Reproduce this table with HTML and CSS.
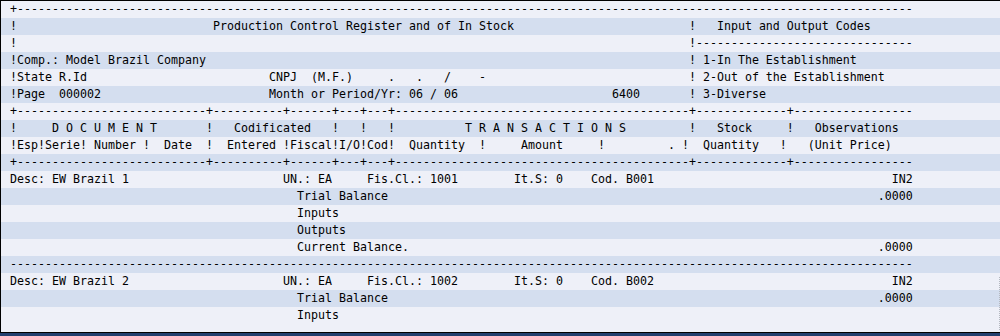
FILE: index.html
```html
<!DOCTYPE html>
<html lang="en">
<head>
<meta charset="utf-8">
<title>Production Control Register and of In Stock</title>
<link rel="stylesheet" href="styles.css">
</head>
<body>
<div class="screen">
<div class="list">
<div class="row">+--------------------------------------------------------------------------------------------------------------------------------</div>
<div class="row">!                            Production Control Register and of In Stock                         !   Input and Output Codes</div>
<div class="row">!                                                                                                !-------------------------------</div>
<div class="row">!Comp.: Model Brazil Company                                                                     ! 1-In The Establishment</div>
<div class="row">!State R.Id                          CNPJ  (M.F.)     .   .   /    -                             ! 2-Out of the Establishment</div>
<div class="row">!Page  000002                        Month or Period/Yr: 06 / 06                      6400       ! 3-Diverse</div>
<div class="row">+---------------------------+----------+------+---+---+------------------------------------------+-------------+-----------------</div>
<div class="row">!     D O C U M E N T       !   Codificated   !   !   !          T R A N S A C T I O N S         !   Stock     !   Observations</div>
<div class="row">!Esp!Serie! Number !  Date  !  Entered !Fiscal!I/O!Cod!  Quantity  !     Amount     !         . !  Quantity   !   (Unit Price)</div>
<div class="row">+---------------------------+----------+------+---+---+------------------------------------------+-------------+-----------------</div>
<div class="row">Desc: EW Brazil 1                      UN.: EA     Fis.Cl.: 1001        It.S: 0    Cod. B001                                  IN2</div>
<div class="row">                                         Trial Balance                                                                      .0000</div>
<div class="row">                                         Inputs</div>
<div class="row">                                         Outputs</div>
<div class="row">                                         Current Balance.                                                                   .0000</div>
<div class="row">---------------------------------------------------------------------------------------------------------------------------------</div>
<div class="row">Desc: EW Brazil 2                      UN.: EA     Fis.Cl.: 1002        It.S: 0    Cod. B002                                  IN2</div>
<div class="row">                                         Trial Balance                                                                      .0000</div>
<div class="row">                                         Inputs</div>
<div class="grip"></div>
</div>
<div class="status"></div>
</div>
</body>
</html>
```
FILE: styles.css
```css
html, body {
  margin: 0;
  padding: 0;
  background: #eef0f8;
}

.screen {
  width: 1000px;
  height: 336px;
  display: flex;
  flex-direction: column;
  overflow: hidden;
}

.list {
  position: relative;
  flex: 1;
  border-top: 1px solid #000;
  border-left: 1px solid #000;
  background: #eef0f8;
}

.row {
  height: 17px;
  line-height: 17px;
  padding-left: 9px;
  white-space: pre;
  font-family: "DejaVu Sans Mono", "Liberation Mono", monospace;
  font-size: 11.63px;
  color: #000;
  background: #eef0f8;
}

.row:nth-child(even) {
  background: #d4deef;
}

.grip {
  position: absolute;
  right: 0;
  bottom: 1px;
  width: 1px;
  height: 54px;
  background: repeating-linear-gradient(to bottom, #b4b8c0 0 1px, transparent 1px 2px);
}

.status {
  height: 3px;
  border-top: 1px solid #000;
  background: #223f6e;
}
```
